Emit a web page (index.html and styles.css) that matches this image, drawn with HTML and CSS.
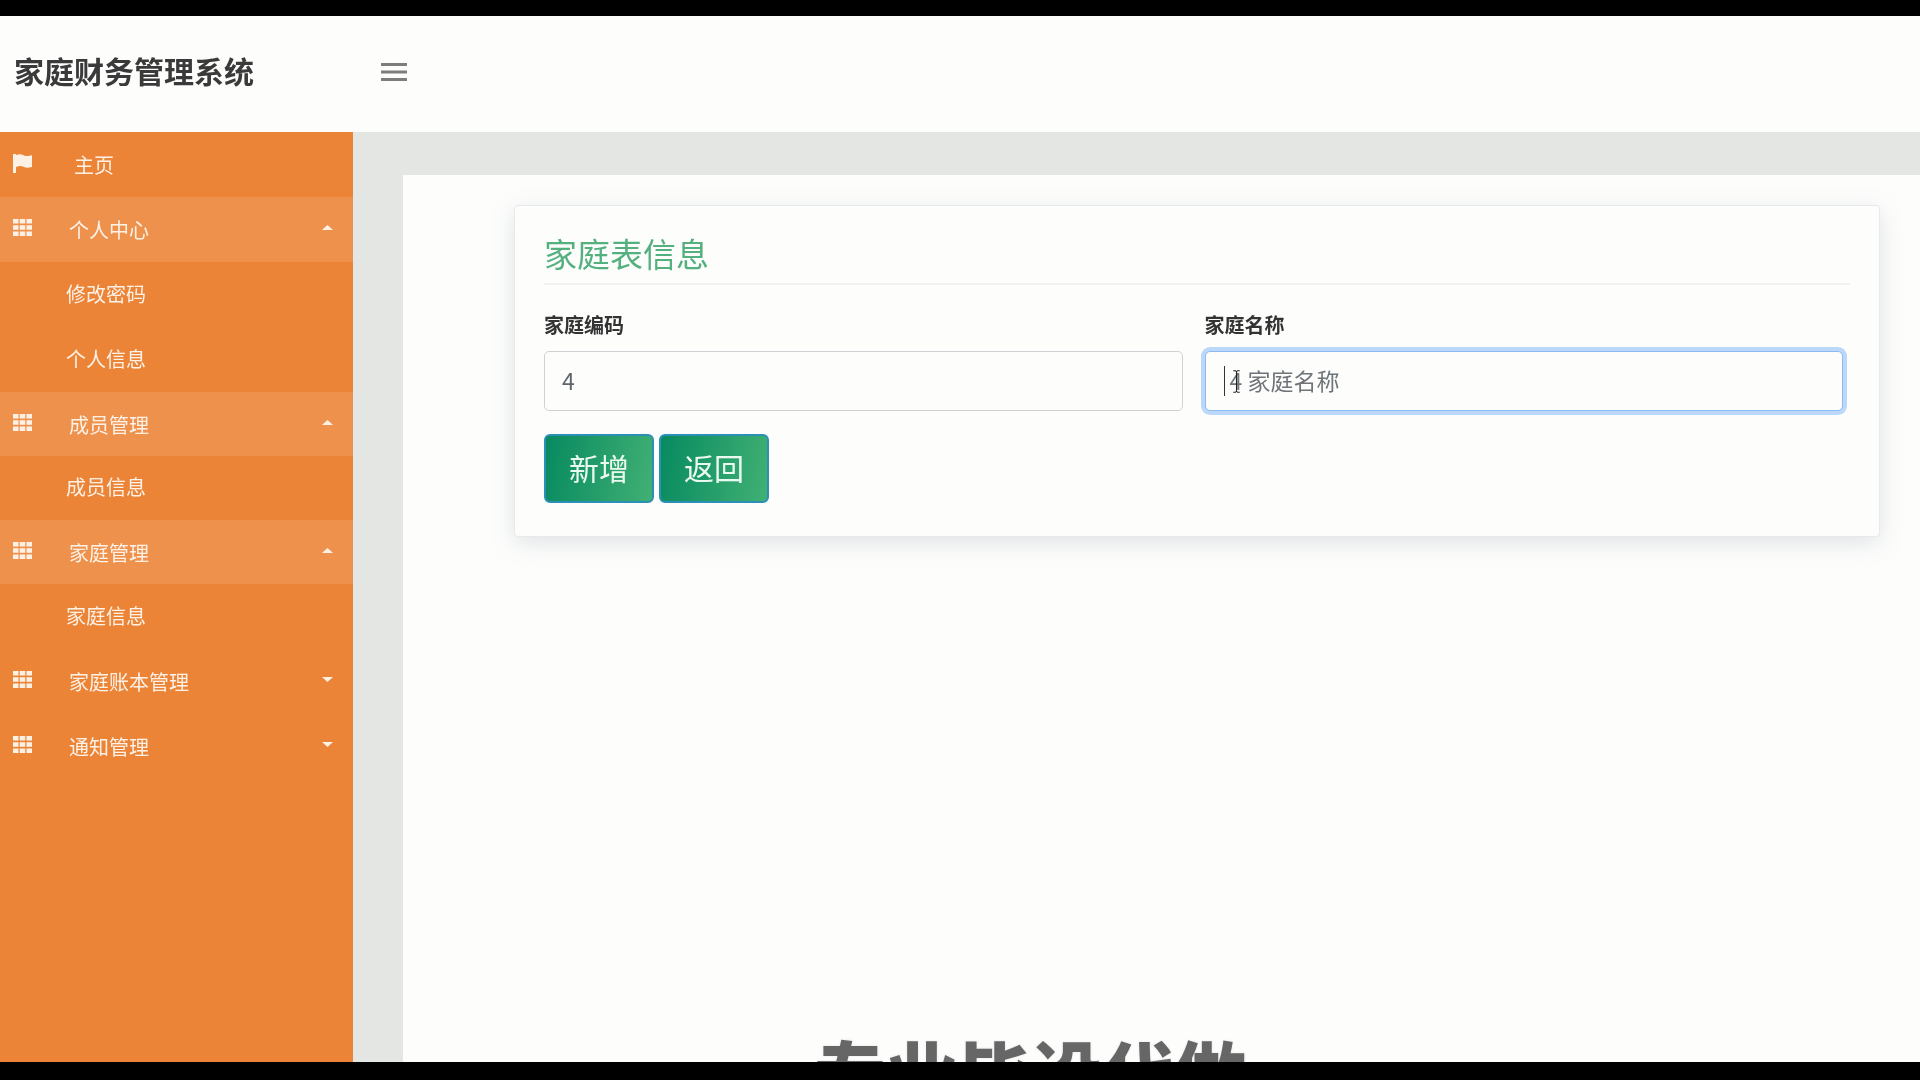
FILE: index.html
```html
<!DOCTYPE html>
<html lang="zh-CN">
<head>
<meta charset="utf-8">
<title>家庭财务管理系统</title>
<link rel="stylesheet" href="styles.css">
</head>
<body>
<svg class="sprites" width="0" height="0" aria-hidden="true">
  <symbol id="grid" viewBox="0 0 19 17"><path d="M0 0h5.500v4.500H0zM6.700 0h5.600v4.500H6.700zM13.500 0H19v4.500h-5.500zM0 6.200h5.500v4.600H0zM6.700 6.200h5.600v4.600H6.700zM13.500 6.200H19v4.600h-5.500zM0 12.500h5.500V17H0zM6.700 12.500h5.600V17H6.700zM13.500 12.500H19V17h-5.500z"/></symbol>
  <symbol id="up" viewBox="0 0 11 5"><path d="M5.500 0L11 5H0z"/></symbol>
  <symbol id="down" viewBox="0 0 11 5"><path d="M0 0h11L5.500 5z"/></symbol>
</svg>
<div class="bar bar-top"></div>
<header class="topnav">
  <div class="brand">家庭财务管理系统</div>
  <svg class="burger" viewBox="0 0 26 18"><path d="M0 0h26v3H0zM0 7.500h26v3H0zM0 15h26v3H0z"/></svg>
</header>
<div class="layout">
  <nav class="sidebar">
    <a class="item home"><svg class="ico flag" viewBox="0 0 19 19"><path d="M0 0h3v19H0zM3 1c3-1 5-1 7.500 0.200s4.500 1 8.500 0V13c-4 1-6 1-8.500-0.200S6 12 3 13z"/></svg><span class="home-label">主页</span></a>
    <a class="item open"><svg class="ico"><use href="#grid"/></svg><span class="label">个人中心</span><svg class="caret"><use href="#up"/></svg></a>
    <a class="sub">修改密码</a>
    <a class="sub">个人信息</a>
    <a class="item open short"><svg class="ico"><use href="#grid"/></svg><span class="label">成员管理</span><svg class="caret"><use href="#up"/></svg></a>
    <a class="sub short">成员信息</a>
    <a class="item open short"><svg class="ico"><use href="#grid"/></svg><span class="label">家庭管理</span><svg class="caret"><use href="#up"/></svg></a>
    <a class="sub">家庭信息</a>
    <a class="item"><svg class="ico"><use href="#grid"/></svg><span class="label">家庭账本管理</span><svg class="caret"><use href="#down"/></svg></a>
    <a class="item"><svg class="ico"><use href="#grid"/></svg><span class="label">通知管理</span><svg class="caret"><use href="#down"/></svg></a>
  </nav>
  <main class="content">
    <div class="panel">
      <section class="card">
        <h2 class="card-title">家庭表信息</h2>
        <form class="form">
          <div class="field">
            <label class="field-label">家庭编码</label>
            <input class="input" type="text" value="4">
          </div>
          <div class="field">
            <label class="field-label">家庭名称</label>
            <div class="input-wrap">
              <input class="input input-focus" type="text" placeholder="4 家庭名称">
              <span class="text-caret"></span>
              <svg class="ibeam" viewBox="0 0 11 32"><path d="M1 1h3l1.500 1.500L7 1h3M5.500 2.500v27M1 31h3l1.500-1.500L7 31h3" fill="none" stroke="#222" stroke-width="1.500"/></svg>
            </div>
          </div>
          <div class="actions">
            <button class="btn" type="button">新增</button>
            <button class="btn" type="button">返回</button>
          </div>
        </form>
      </section>
    </div>
    <div class="watermark">专业毕设代做</div>
  </main>
</div>
<div class="bar bar-bottom"></div>
</body>
</html>
```
FILE: styles.css
```css
* { box-sizing: border-box; }
html, body { height: 100%; }
body {
  margin: 0;
  height: 1080px;
  overflow: hidden;
  display: flex;
  flex-direction: column;
  background: #000;
  font-family: "Noto Sans CJK SC", "Noto Sans", sans-serif;
  color: #333;
  filter: blur(.45px);
}
.sprites { position: absolute; }
.bar { background: #000; flex: none; }
.bar-top { height: 16px; }
.bar-bottom { height: 18px; }

.topnav {
  flex: none;
  height: 116px;
  padding-bottom: 4px;
  background: #fdfefc;
  display: flex;
  align-items: center;
}
.brand {
  width: 381px;
  padding: 0 0 4px 14px;
  font-size: 30px;
  font-weight: 700;
  line-height: 40px;
  color: #3a3a3a;
  white-space: nowrap;
}
.burger { width: 26px; height: 18px; fill: #7d7d7d; }

.layout { flex: 1; display: flex; min-height: 0; }

.sidebar {
  flex: none;
  width: 353px;
  background: #eb8436;
  display: flex;
  flex-direction: column;
  color: #fdf1e6;
}
.item, .sub {
  flex: none;
  height: 65px;
  display: flex;
  align-items: center;
  font-size: 20px;
  white-space: nowrap;
}
.short { height: 64px; }
.item { padding-left: 13px; }
.sub { padding: 0 0 3px 66px; }
.open { background: #ee914c; }
.ico { width: 19px; height: 17px; fill: #fdf1e6; margin-top: -4px; flex: none; }
.flag { height: 19px; margin-top: -2px; }
.label { margin-left: 37px; flex: 1; }
.home-label { margin-left: 42px; }
.caret { width: 11px; height: 5px; fill: #fdf1e6; margin-right: 20px; margin-top: -4px; flex: none; }

.content {
  flex: 1;
  position: relative;
  overflow: hidden;
  background: #e4e6e4;
  padding: 43px 0 0 50px;
}
.panel {
  height: 100%;
  background: #fdfefc;
  padding: 30px 40px 0 111px;
}
.card {
  height: 332px;
  background: #fdfefc;
  border: 1px solid #e8eaea;
  border-radius: 4px;
  box-shadow: 0 6px 24px rgba(90, 100, 130, .18);
  padding: 0 29px;
}
.card-title {
  margin: 0;
  height: 79px;
  padding: 25px 0 0;
  font-size: 33px;
  font-weight: 400;
  line-height: 44px;
  color: #55b07f;
  border-bottom: 2px solid #f1f2f1;
}
.form {
  display: grid;
  grid-template-columns: 638.5px 638.5px;
  column-gap: 22px;
}
.field { display: flex; flex-direction: column; }
.field-label {
  margin-top: 26px;
  height: 40px;
  font-size: 20px;
  font-weight: 700;
  line-height: 28px;
  color: #333;
}
.input-wrap { position: relative; }
.input {
  display: block;
  width: 100%;
  height: 60px;
  padding: 0 17px 3px;
  border: 1px solid #cfd2d4;
  border-radius: 5px;
  background: #fdfefc;
  font-family: inherit;
  font-size: 23px;
  color: #5f656b;
  outline: none;
}
.input-focus {
  padding-left: 24px;
  border-color: #8abcf3;
  box-shadow: 0 0 0 4px #bcd8f8;
}
.input::placeholder { color: #6f7479; opacity: 1; }
.text-caret {
  position: absolute;
  left: 19px;
  top: 15px;
  width: 1px;
  height: 30px;
  background: #333;
}
.ibeam {
  position: absolute;
  left: 26px;
  top: 19px;
  width: 11px;
  height: 23px;
}
.actions { grid-column: 1 / -1; display: flex; gap: 5px; margin-top: 23px; }
.btn {
  width: 110px;
  height: 69px;
  padding: 0 0 3px;
  border: 2px solid #2c8fb5;
  border-radius: 6px;
  background: linear-gradient(100deg, #078a60 0%, #41b074 100%);
  color: #eafaf0;
  font-family: inherit;
  font-size: 30px;
  line-height: 1;
}

.watermark {
  position: absolute;
  left: 461px;
  top: 899px;
  font-size: 72px;
  font-weight: 900;
  line-height: 80px;
  color: #666;
  white-space: nowrap;
  text-shadow: 0 0 2px #fff, 0 0 2px #ccc;
}
```
